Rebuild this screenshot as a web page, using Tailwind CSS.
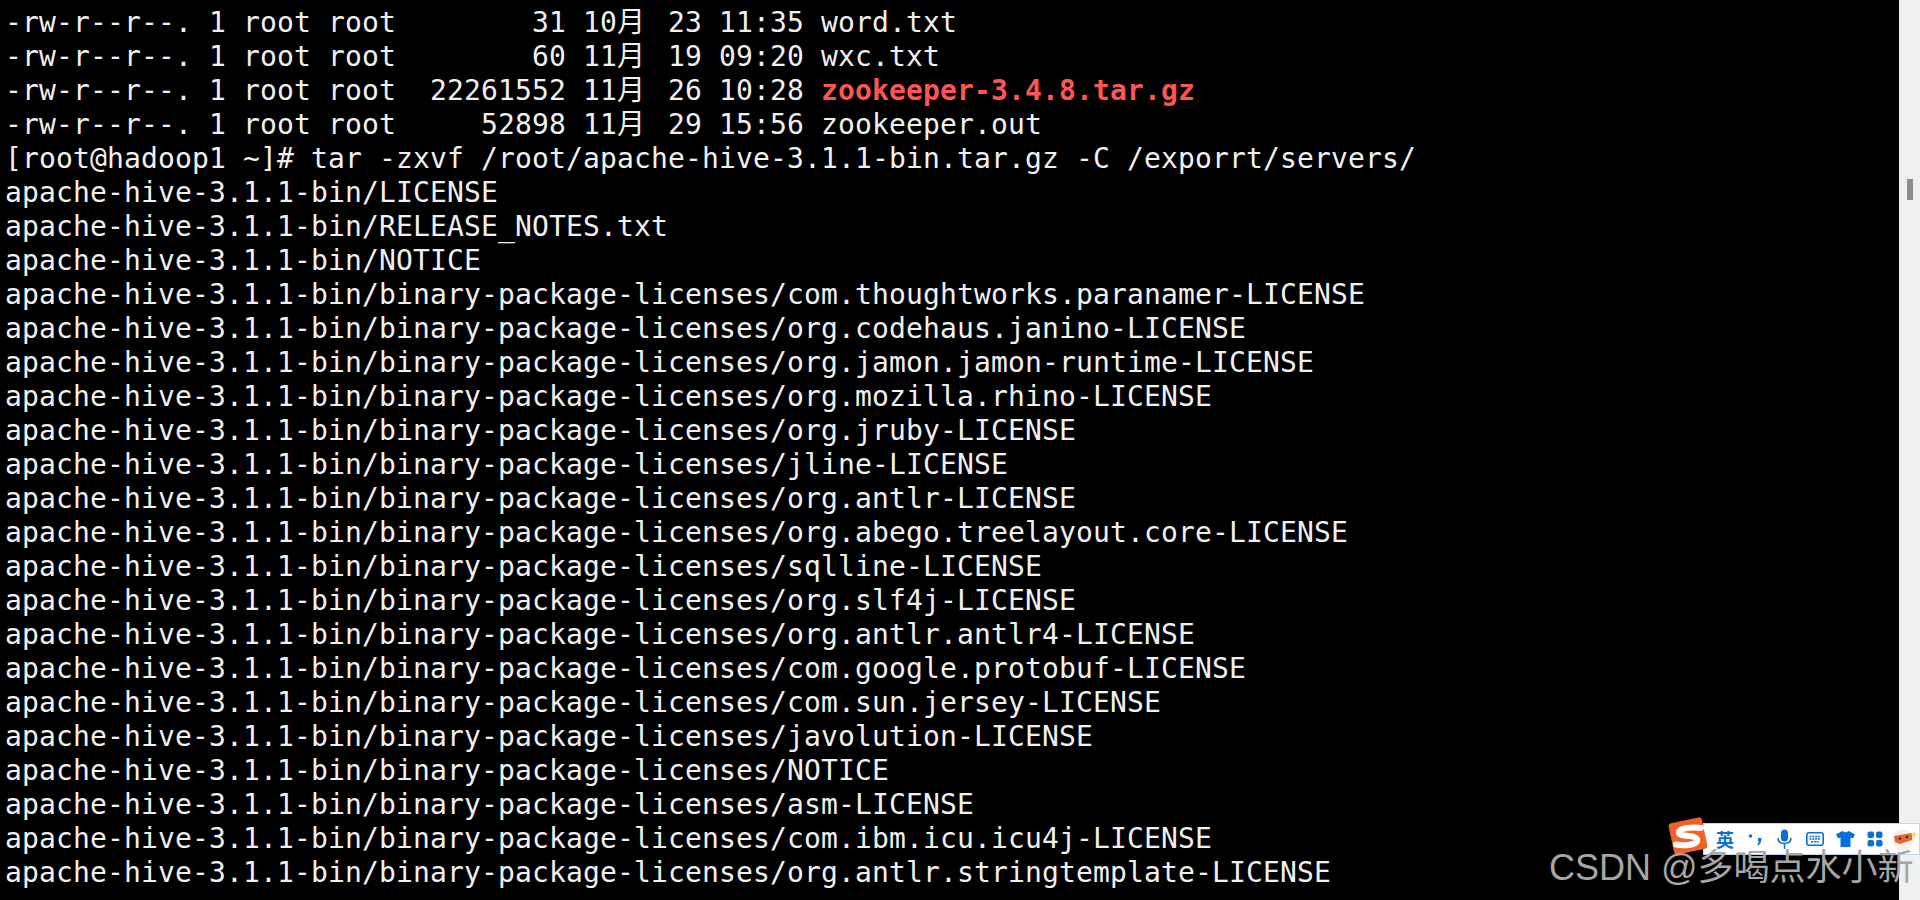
<!DOCTYPE html>
<html>
<head>
<title>hadoop1 terminal</title>
<meta charset="UTF-8">
<script src="https://cdn.jsdelivr.net/npm/@tailwindcss/browser@4"></script>
</head>
<body class="h-screen w-full overflow-hidden bg-black">
<div class="relative flex h-[900px] w-full">
  <!-- terminal -->
  <div class="h-full w-[1899px] overflow-hidden bg-black pl-[5px] pt-[6px]">
<pre class="font-['DejaVu_Sans_Mono','Noto_Sans_CJK_SC',monospace] text-[28px] leading-[34px] tracking-[0.144px] text-[#f0f0f0]">-rw-r--r--. 1 root root        31 10<span class="inline-block w-[34px]">月</span> 23 11:35 word.txt
-rw-r--r--. 1 root root        60 11<span class="inline-block w-[34px]">月</span> 19 09:20 wxc.txt
-rw-r--r--. 1 root root  22261552 11<span class="inline-block w-[34px]">月</span> 26 10:28 <span class="font-bold text-[#ff5555]">zookeeper-3.4.8.tar.gz</span>
-rw-r--r--. 1 root root     52898 11<span class="inline-block w-[34px]">月</span> 29 15:56 zookeeper.out
[root@hadoop1 ~]# tar -zxvf /root/apache-hive-3.1.1-bin.tar.gz -C /exporrt/servers/
apache-hive-3.1.1-bin/LICENSE
apache-hive-3.1.1-bin/RELEASE_NOTES.txt
apache-hive-3.1.1-bin/NOTICE
apache-hive-3.1.1-bin/binary-package-licenses/com.thoughtworks.paranamer-LICENSE
apache-hive-3.1.1-bin/binary-package-licenses/org.codehaus.janino-LICENSE
apache-hive-3.1.1-bin/binary-package-licenses/org.jamon.jamon-runtime-LICENSE
apache-hive-3.1.1-bin/binary-package-licenses/org.mozilla.rhino-LICENSE
apache-hive-3.1.1-bin/binary-package-licenses/org.jruby-LICENSE
apache-hive-3.1.1-bin/binary-package-licenses/jline-LICENSE
apache-hive-3.1.1-bin/binary-package-licenses/org.antlr-LICENSE
apache-hive-3.1.1-bin/binary-package-licenses/org.abego.treelayout.core-LICENSE
apache-hive-3.1.1-bin/binary-package-licenses/sqlline-LICENSE
apache-hive-3.1.1-bin/binary-package-licenses/org.slf4j-LICENSE
apache-hive-3.1.1-bin/binary-package-licenses/org.antlr.antlr4-LICENSE
apache-hive-3.1.1-bin/binary-package-licenses/com.google.protobuf-LICENSE
apache-hive-3.1.1-bin/binary-package-licenses/com.sun.jersey-LICENSE
apache-hive-3.1.1-bin/binary-package-licenses/javolution-LICENSE
apache-hive-3.1.1-bin/binary-package-licenses/NOTICE
apache-hive-3.1.1-bin/binary-package-licenses/asm-LICENSE
apache-hive-3.1.1-bin/binary-package-licenses/com.ibm.icu.icu4j-LICENSE
apache-hive-3.1.1-bin/binary-package-licenses/org.antlr.stringtemplate-LICENSE</pre>
  </div>

  <!-- scrollbar -->
  <div class="relative h-full w-[21px] bg-[#f0f0f0]">
    <div class="absolute left-[8px] top-[179px] h-[21px] w-[6px] bg-[#8c8c8c]"></div>
  </div>

  <!-- sogou ime bar -->
  <div class="absolute left-[1703px] top-[823px] flex h-[32px] w-[217px] items-center border border-[#c4d4ea] bg-white">
    <span class="ml-[12px] w-[18px] font-['Noto_Sans_CJK_SC',sans-serif] text-[18px] font-bold leading-none text-[#0a6fd8]">英</span>
    <svg class="ml-[14px]" width="14" height="14" viewBox="0 0 14 14" fill="#0a6fd8"><circle cx="2.500" cy="4" r="1.800"/><path d="M10 6h3.500c0 3.500-1 6-3.500 7.500l-.8-1.200c1-.8 1.600-1.800 1.800-3H10z"/></svg>
    <svg class="ml-[15px]" width="15" height="20" viewBox="0 0 15 20" fill="none" stroke="#0a6fd8" stroke-width="1.500"><rect x="4" y="0.500" width="7" height="12" rx="3.500" fill="#0a6fd8" stroke="none"/><path d="M1 9c0 3.500 2.500 5.500 6.500 5.500S14 12.500 14 9M7.500 14.500V20"/></svg>
    <svg class="ml-[14px]" width="18" height="14" viewBox="0 0 18 14" fill="none" stroke="#0a6fd8"><rect x="0.800" y="0.800" width="16.400" height="12.400" rx="2.200" stroke-width="1.600"/><path d="M3.500 4.500h11M3.500 7h11M5 9.800h8" stroke-width="1.500" stroke-dasharray="2 .8"/></svg>
    <svg class="ml-[12px]" width="19" height="16" viewBox="0 0 19 16" fill="#0a6fd8"><path d="M6 0 9.500 1.500 13 0 19 3.500 17 7.500 14.500 6.500V16H4.500V6.500L2 7.500 0 3.500z"/></svg>
    <svg class="ml-[12px]" width="16" height="16" viewBox="0 0 16 16" fill="#0a6fd8"><rect x="0.500" y="0.500" width="6.500" height="6.500" rx="2"/><rect x="9" y="0.500" width="6.500" height="6.500" rx="2"/><rect x="0.500" y="9" width="6.500" height="6.500" rx="2"/><rect x="9" y="9" width="6.500" height="6.500" rx="2"/></svg>
    <svg class="ml-[9px]" width="26" height="26" viewBox="0 0 26 26"><circle cx="11" cy="14" r="10.500" fill="#f6f0ec"/><path d="M2 10 20 7 20 14 8 18 3 16z" fill="#e2672a"/><circle cx="8" cy="12.500" r="1.200" fill="#3a2a22"/><circle cx="15" cy="11" r="1.200" fill="#3a2a22"/><path d="M22 5l1 2.500 2.500 1-2.500 1-1 2.500-1-2.500-2.500-1 2.500-1z" fill="#f7d64a"/></svg>
  </div>

  <!-- sogou s logo -->
  <svg class="absolute left-[1668px] top-[817px]" width="40" height="38" viewBox="0 0 40 38">
    <rect x="3" y="3" width="34" height="32" rx="3" fill="#f0622a" transform="rotate(-12 20 19)"/>
    <path d="M33 11C24 10 13 11 11 14.500C9.500 18 16 18.500 21 19C27 19.500 31 21.500 28.500 25C26 28 16 29 8 27.500" fill="none" stroke="white" stroke-width="6" stroke-linecap="round"/>
  </svg>

  <!-- csdn watermark -->
  <div class="absolute left-[1549px] top-[846px] whitespace-nowrap font-['Liberation_Sans','Noto_Sans_CJK_SC',sans-serif] text-[36px] leading-[44px] text-[#a6a6a6]">CSDN @多喝点水小新</div>
</div>
</body>
</html>
